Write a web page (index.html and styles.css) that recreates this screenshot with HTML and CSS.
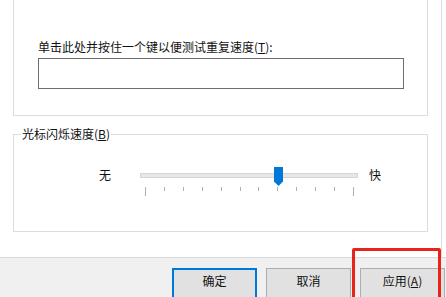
FILE: index.html
```html
<!DOCTYPE html>
<html lang="zh-CN">
<head>
  <meta charset="utf-8" />
  <meta name="viewport" content="width=device-width,initial-scale=1" />
  <title>键盘 属性</title>
  <link rel="stylesheet" href="styles.css">
</head>
<body>
  <div class="sheet">
    <div class="tab-page">
      <label class="field-label" for="testBox">单击此处并按住一个键以便测试重复速度(<u>T</u>):</label>
      <input id="testBox" class="test-box" type="text" />
    </div>

    <fieldset class="group">
      <legend>光标闪烁速度(<u>B</u>)</legend>
      <div class="slider-row">
        <span class="end-label">无</span>
        <div class="slider">
          <div class="track"></div>
          <svg class="thumb" width="9" height="19" viewBox="0 0 9 19">
            <path d="M0 0H9V14.5L4.5 19L0 14.5Z" fill="#0078d7"/>
          </svg>
          <div class="ticks">
            <i class="long"></i><i></i><i></i><i></i><i></i><i></i>
            <i></i><i></i><i></i><i></i><i></i><i class="long"></i>
          </div>
        </div>
        <span class="end-label">快</span>
      </div>
    </fieldset>
  </div>

  <div class="footer">
    <button class="btn default">确定</button>
    <button class="btn">取消</button>
    <button class="btn">应用(<u>A</u>)</button>
    <div class="highlight"></div>
  </div>
</body>
</html>
```

FILE: styles.css
```css
/* — 기본 — */
body {
  margin: 0;
  width: 446px; height: 297px;
  overflow: hidden;
  background: #fff;
  font-family: "Noto Sans CJK SC", "Microsoft YaHei", sans-serif;
  font-size: 12px; line-height: 16px;
  color: #111;
}
u { text-decoration: underline; text-underline-offset: 1px; }

.sheet {
  width: 441px; height: 257px;
  border-right: 1px solid #dedede;
  overflow: hidden;
}

/* — 탭 페이지 — */
.tab-page {
  margin: 0 13px;
  height: 116px;
  border: 1px solid #dcdcdc; border-top: none;
  padding: 39px 0 0 24px;
  box-sizing: border-box;
}
.field-label { display: block; }
.test-box {
  display: block;
  margin-top: 3px;
  width: 366px; height: 31px;
  box-sizing: border-box;
  border: 1px solid #6e6e6e;
  background: #fff;
  font: inherit;
}

/* — 그룹 박스 — */
.group {
  margin: 10px 13px 0;
  padding: 0 0 35px;
  border: 1px solid #dcdcdc;
  min-width: 0;
}
.group legend {
  margin-left: 7px;
  padding: 0 1px;
}
.slider-row {
  display: flex; align-items: flex-start;
  margin: 25px 0 0 85px;
}
.slider {
  position: relative;
  width: 218px;
  margin: 0 11px 0 29px;
  padding-top: 6px;
}
.track {
  height: 5px;
  background: #e7e7e7;
  border: 1px solid #d6d6d6;
  box-sizing: border-box;
}
.thumb {
  position: absolute; left: 134px; top: 0;
}
.ticks {
  display: flex; justify-content: space-between; align-items: flex-start;
  padding: 0 4px 0 5px;
  margin-top: 9px;
}
.ticks i {
  display: block; width: 1px; height: 4px;
  background: #b0b0b0;
}
.ticks i.long { height: 9px; }

/* — 하단 버튼 — */
.footer {
  position: relative;
  height: 40px;
  border-top: 1px solid #dadada;
  background: #f0f0f0;
  box-sizing: border-box;
  display: flex; gap: 9px;
  padding: 10px 0 0 172px;
}
.btn {
  flex: none;
  width: 85px; height: 32px;
  box-sizing: border-box;
  border: 1px solid #adadad;
  background: #e1e1e1;
  font: inherit; color: #111;
  padding: 0 0 6px;
  cursor: pointer;
}
.btn.default { border: 2px solid #0078d7; }
.highlight {
  position: absolute; left: 352px; top: -10px;
  width: 89px; height: 60px;
  box-sizing: border-box;
  border: 3px solid #e8231c;
  border-radius: 2px;
}
```
